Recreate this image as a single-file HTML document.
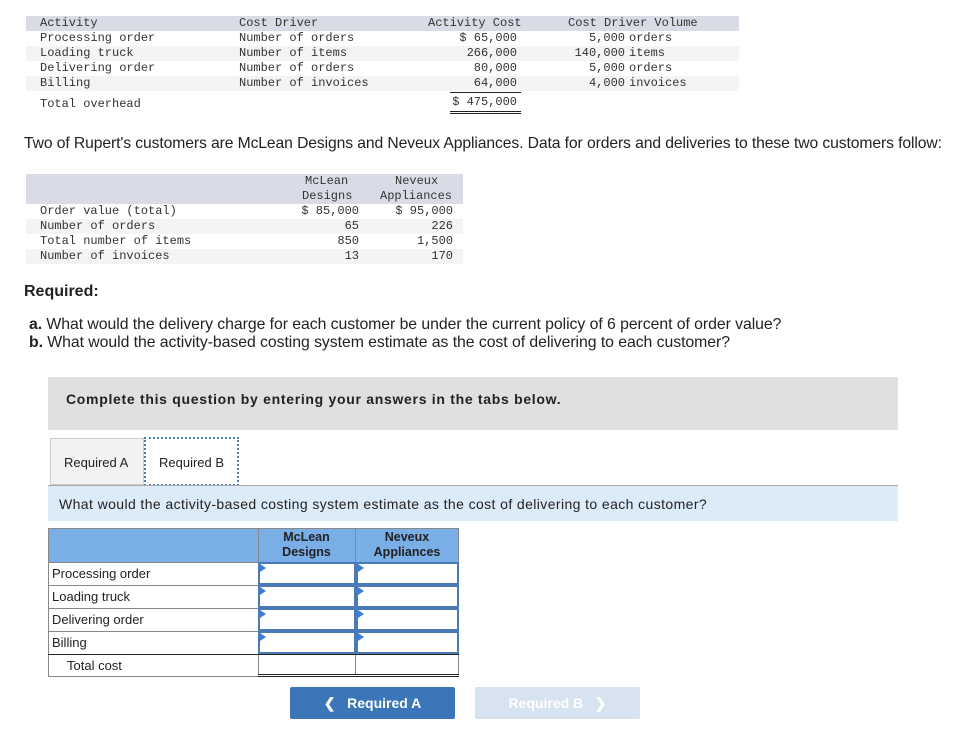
<!DOCTYPE html>
<html><head><meta charset="utf-8"><style>
body{margin:0;width:979px;height:753px;position:relative;background:#fff;font-family:"Liberation Sans",sans-serif;color:#222;overflow:hidden}
.a{position:absolute;white-space:pre}
.m{font-family:"Liberation Mono",monospace;font-size:12px;color:#333;line-height:15px}
.r{text-align:right}
.bg{position:absolute}
.s{font-size:15.8px;color:#222}
.cell{position:absolute;border:1px solid #888;box-sizing:border-box}
.inp{position:absolute;border:2px solid #4a7bb7;box-sizing:border-box;background:#fff}
.inp:before{content:"";position:absolute;left:0;top:0;border-left:6px solid #3b7dd8;border-top:4px solid transparent;border-bottom:4px solid transparent}
.lbl{position:absolute;font-size:13px;color:#222;left:52px}
</style></head><body>
<div class="bg" style="left:26px;top:16px;width:713px;height:15px;background:#d9dce6"></div>
<div class="bg" style="left:26px;top:46px;width:713px;height:15px;background:#f4f4f4"></div>
<div class="bg" style="left:26px;top:76px;width:713px;height:15px;background:#f4f4f4"></div>
<div class="a m" style="left:40px;top:16px">Activity
Processing order
Loading truck
Delivering order
Billing</div>
<div class="a m" style="left:40px;top:97px">Total overhead</div>
<div class="a m" style="left:239px;top:16px">Cost Driver
Number of orders
Number of items
Number of orders
Number of invoices</div>
<div class="a m" style="left:428px;top:16px">Activity Cost</div>
<div class="a m r" style="left:400px;width:117px;top:31px">$ 65,000
266,000
80,000
64,000</div>
<div class="bg" style="left:450px;top:92px;width:71px;height:1px;background:#222"></div>
<div class="a m r" style="left:400px;width:117px;top:95px">$ 475,000</div>
<div class="bg" style="left:450px;top:111px;width:71px;height:3px;border-top:1px solid #222;border-bottom:1px solid #222;box-sizing:border-box"></div>
<div class="a m" style="left:568px;top:16px">Cost Driver Volume</div>
<div class="a m r" style="left:540px;width:85px;top:31px">5,000
140,000
5,000
4,000</div>
<div class="a m" style="left:629px;top:31px">orders
items
orders
invoices</div>

<div class="a" style="left:24px;top:135px;font-size:15.7px;color:#222;letter-spacing:-0.1px">Two of Rupert's customers are McLean Designs and Neveux Appliances. Data for orders and deliveries to these two customers follow:</div>

<div class="bg" style="left:26px;top:174px;width:437px;height:30px;background:#d9dce6"></div>
<div class="bg" style="left:26px;top:219px;width:437px;height:15px;background:#f4f4f4"></div>
<div class="bg" style="left:26px;top:249px;width:437px;height:15px;background:#f4f4f4"></div>
<div class="a m" style="left:305px;top:174px">McLean</div>
<div class="a m" style="left:302px;top:189px">Designs</div>
<div class="a m" style="left:395px;top:174px">Neveux</div>
<div class="a m" style="left:380px;top:189px">Appliances</div>
<div class="a m" style="left:40px;top:204px">Order value (total)
Number of orders
Total number of items
Number of invoices</div>
<div class="a m r" style="left:280px;width:79px;top:204px">$ 85,000
65
850
13</div>
<div class="a m r" style="left:380px;width:73px;top:204px">$ 95,000
226
1,500
170</div>

<div class="a" style="left:24px;top:283px;font-size:16px;font-weight:bold">Required:</div>
<div class="a s" style="left:29px;top:316px;line-height:18px;letter-spacing:-0.05px"><b>a.</b> What would the delivery charge for each customer be under the current policy of 6 percent of order value?
<b>b.</b> What would the activity-based costing system estimate as the cost of delivering to each customer?</div>

<div class="bg" style="left:48px;top:377px;width:850px;height:53px;background:#e0e0e0"></div>
<div class="a" style="left:66px;top:391px;font-size:14px;font-weight:bold;color:#222;letter-spacing:0.7px">Complete this question by entering your answers in the tabs below.</div>

<div class="bg" style="left:50px;top:438px;width:94px;height:47px;background:#f2f2f2;border:1px solid #ccc;box-sizing:border-box"></div>
<div class="a" style="left:64px;top:455px;font-size:13px">Required A</div>
<div class="bg" style="left:144px;top:437px;width:95px;height:49px;background:#fff;border:2px dotted #4a7bb7;box-sizing:border-box"></div>
<div class="a" style="left:159px;top:455px;font-size:13px">Required B</div>
<div class="bg" style="left:48px;top:485px;width:850px;height:1px;background:#aaa"></div>
<div class="bg" style="left:48px;top:486px;width:850px;height:35px;background:#dcebf8"></div>
<div class="a" style="left:59px;top:496px;font-size:14px;letter-spacing:0.4px">What would the activity-based costing system estimate as the cost of delivering to each customer?</div>

<div class="cell" style="left:48px;top:528px;width:411px;height:35px;background:#7aaee6"></div>
<div class="bg" style="left:258px;top:528px;width:1px;height:148px;background:#888"></div>
<div class="bg" style="left:355px;top:528px;width:1px;height:148px;background:#888"></div>
<div class="a" style="left:258px;width:97px;top:530px;text-align:center;font-size:12.5px;font-weight:bold;line-height:15px;color:#222">McLean
Designs</div>
<div class="a" style="left:355px;width:104px;top:530px;text-align:center;font-size:12.5px;font-weight:bold;line-height:15px;color:#222">Neveux
Appliances</div>
<div class="cell" style="left:48px;top:562px;width:411px;height:115px;border-top:none"></div>
<div class="bg" style="left:48px;top:585px;width:411px;height:1px;background:#888"></div>
<div class="bg" style="left:48px;top:608px;width:411px;height:1px;background:#888"></div>
<div class="bg" style="left:48px;top:631px;width:411px;height:1px;background:#888"></div>
<div class="bg" style="left:48px;top:654px;width:411px;height:1px;background:#222"></div>
<div class="bg" style="left:258px;top:674px;width:201px;height:3px;border-top:1px solid #222;border-bottom:1px solid #222;box-sizing:border-box;background:#fff"></div>
<div class="inp" style="left:258px;top:562px;width:98px;height:23px"></div>
<div class="inp" style="left:356px;top:562px;width:103px;height:23px"></div>
<div class="inp" style="left:258px;top:585px;width:98px;height:23px"></div>
<div class="inp" style="left:356px;top:585px;width:103px;height:23px"></div>
<div class="inp" style="left:258px;top:608px;width:98px;height:23px"></div>
<div class="inp" style="left:356px;top:608px;width:103px;height:23px"></div>
<div class="inp" style="left:258px;top:631px;width:98px;height:23px"></div>
<div class="inp" style="left:356px;top:631px;width:103px;height:23px"></div>
<div class="lbl" style="top:566px">Processing order</div>
<div class="lbl" style="top:589px">Loading truck</div>
<div class="lbl" style="top:612px">Delivering order</div>
<div class="lbl" style="top:635px">Billing</div>
<div class="lbl" style="top:658px;left:67px">Total cost</div>

<div class="bg" style="left:290px;top:687px;width:165px;height:32px;background:#3a76b8;border-radius:2px"></div>
<div class="a" style="left:290px;width:165px;top:695px;text-align:center;color:#fff;font-size:14px;font-weight:bold">&#10094;&nbsp;&nbsp;&nbsp;Required A</div>
<div class="bg" style="left:475px;top:687px;width:165px;height:32px;background:#d7e3f0;border-radius:2px"></div>
<div class="a" style="left:475px;width:165px;top:695px;text-align:center;color:#fff;font-size:14px;font-weight:bold">Required B&nbsp;&nbsp;&nbsp;&#10095;</div>
</body></html>
